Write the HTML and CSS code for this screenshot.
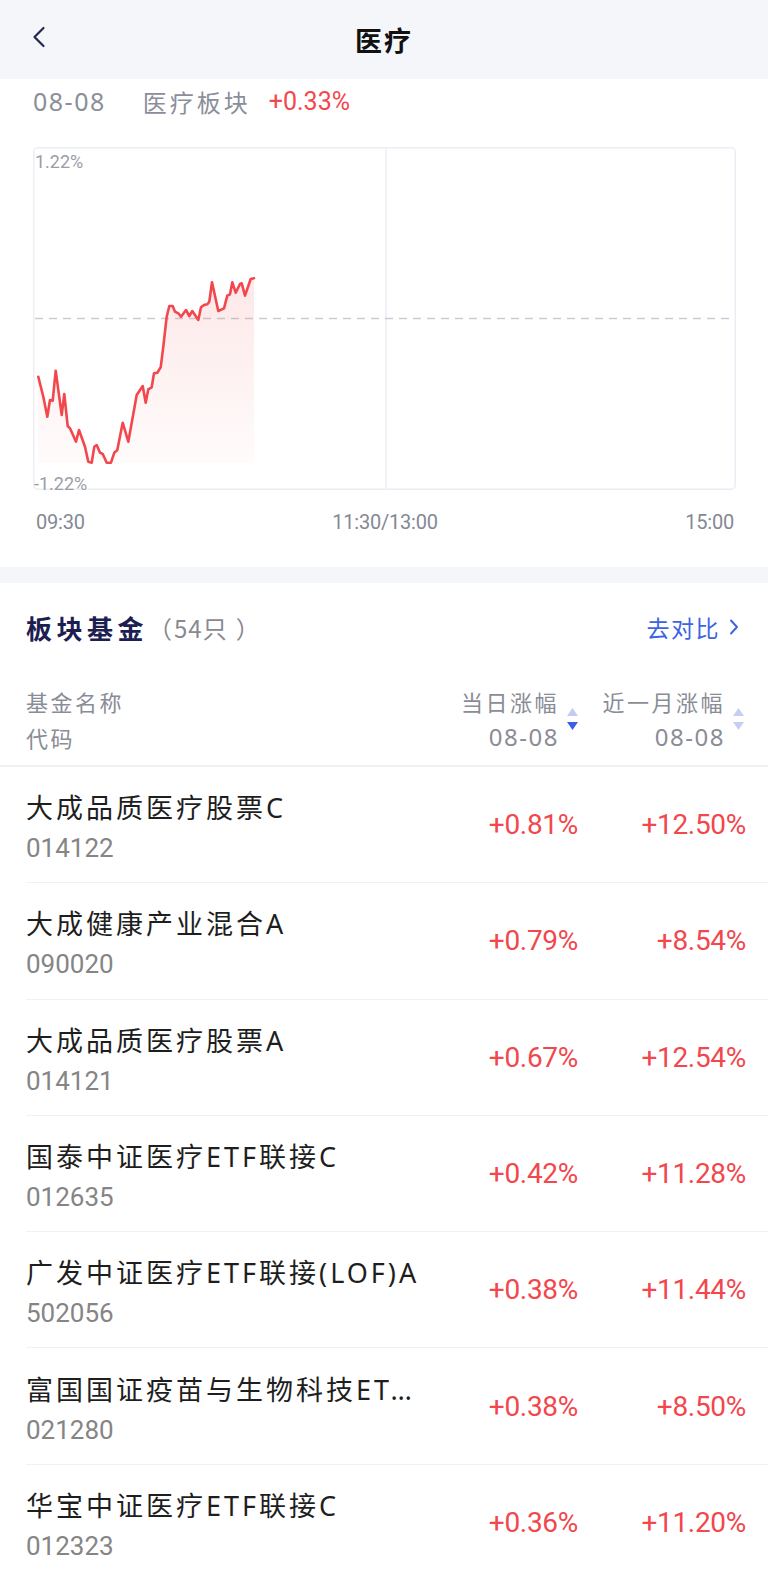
FILE: index.html
```html
<!DOCTYPE html>
<html lang="zh-CN">
<head>
<meta charset="utf-8">
<title>医疗</title>
<link rel="stylesheet" href="styles.css">
</head>
<body>
<div class="page">
  <header class="topbar">
    <span class="back">
      <svg width="16" height="22" viewBox="0 0 16 22"><path d="M12.5 2 L3.5 11 L12.5 20" fill="none" stroke="#23284f" stroke-width="2.2" stroke-linecap="round" stroke-linejoin="round"/></svg>
    </span>
    <h1 class="title">医疗</h1>
  </header>

  <div class="info">
    <span class="info-date">08-08</span>
    <span class="info-name">医疗板块</span>
    <span class="info-pct">+0.33%</span>
  </div>

  <div class="chart">
    <svg width="703" height="343" viewBox="33 147 703 343" class="chart-svg">
      <defs>
        <linearGradient id="fillg" x1="0" y1="278" x2="0" y2="463" gradientUnits="userSpaceOnUse">
          <stop offset="0" stop-color="#f24b50" stop-opacity="0.13"/>
          <stop offset="1" stop-color="#f24b50" stop-opacity="0.02"/>
        </linearGradient>
      </defs>
      <rect x="33.75" y="147.75" width="701.5" height="341.5" rx="4" fill="#fff" stroke="#eceef4" stroke-width="1.5"/>
      <line x1="386" y1="148" x2="386" y2="489" stroke="#eceef4" stroke-width="1.5"/>
      <line x1="35" y1="318.5" x2="734" y2="318.5" stroke="#cbccd3" stroke-width="1.5" stroke-dasharray="8 6"/>
      <path fill="url(#fillg)" d="M38.3 376.7 L43.3 396.7 L47.3 416.7 L50 400 L52.7 400.7 L55.7 370.7 L61.7 415 L64.3 394 L67.7 426 L70 428.3 L76 441.7 L79 430 L85 446.7 L88.3 461.7 L91.7 462.7 L94.3 446.7 L96.7 445 L100 452.7 L102.7 454 L106.7 462.7 L111 462.7 L114.3 452.7 L117.3 450 L122.7 422.7 L128.3 441.7 L136.7 395 L142.7 386 L145.7 402.7 L148.3 389.3 L151.7 387.3 L154 373.3 L157.3 372.7 L160.7 367.3 L163.3 346.7 L166.7 316.7 L169.3 306 L172.7 306 L175 311.7 L178.3 313.3 L181 316.7 L186 310 L189.3 316 L192.3 311 L198.3 320 L201 307.3 L204 305 L207.3 304.3 L209.3 301.7 L212 282.3 L218.3 311 L224 308.3 L227.3 295.7 L230 294.3 L232.3 282.3 L235.7 292.7 L240 284 L241.7 283.3 L245 295.7 L250.7 279 L254 278.3 L254 463 L38.3 463 Z"/>
      <path fill="none" stroke="#f2474d" stroke-width="2.6" stroke-linejoin="round" stroke-linecap="round" d="M38.3 376.7 L43.3 396.7 L47.3 416.7 L50 400 L52.7 400.7 L55.7 370.7 L61.7 415 L64.3 394 L67.7 426 L70 428.3 L76 441.7 L79 430 L85 446.7 L88.3 461.7 L91.7 462.7 L94.3 446.7 L96.7 445 L100 452.7 L102.7 454 L106.7 462.7 L111 462.7 L114.3 452.7 L117.3 450 L122.7 422.7 L128.3 441.7 L136.7 395 L142.7 386 L145.7 402.7 L148.3 389.3 L151.7 387.3 L154 373.3 L157.3 372.7 L160.7 367.3 L163.3 346.7 L166.7 316.7 L169.3 306 L172.7 306 L175 311.7 L178.3 313.3 L181 316.7 L186 310 L189.3 316 L192.3 311 L198.3 320 L201 307.3 L204 305 L207.3 304.3 L209.3 301.7 L212 282.3 L218.3 311 L224 308.3 L227.3 295.7 L230 294.3 L232.3 282.3 L235.7 292.7 L240 284 L241.7 283.3 L245 295.7 L250.7 279 L254 278.3"/>
      <text x="35" y="168" class="axis-label">1.22%</text>
      <text x="34" y="490" class="axis-label">-1.22%</text>
    </svg>
  </div>

  <div class="times">
    <span>09:30</span>
    <span>11:30/13:00</span>
    <span>15:00</span>
  </div>

  <div class="band"></div>

  <section class="funds">
    <div class="funds-head">
      <h2 class="funds-title">板块基金<span class="funds-count"><span class="paren">（</span>54只<span class="paren">）</span></span></h2>
      <a class="compare">去对比
        <svg width="10" height="16" viewBox="0 0 10 16"><path d="M2 1.5 L8 8 L2 14.5" fill="none" stroke="#3d63e3" stroke-width="1.9" stroke-linecap="round" stroke-linejoin="round"/></svg>
      </a>
    </div>

    <div class="thead">
      <div class="th-name">
        <div>基金名称</div>
        <div>代码</div>
      </div>
      <div class="th-col col1">
        <div class="th-text">
          <div>当日涨幅</div>
          <div class="th-date">08-08</div>
        </div>
        <svg class="sort" width="11" height="22" viewBox="0 0 11 22"><polygon points="0,8 5.5,0 11,8" fill="#c4caf0"/><polygon points="0,14 11,14 5.5,22" fill="#3a5ee6"/></svg>
      </div>
      <div class="th-col col2">
        <div class="th-text">
          <div>近一月涨幅</div>
          <div class="th-date">08-08</div>
        </div>
        <svg class="sort" width="11" height="22" viewBox="0 0 11 22"><polygon points="0,8 5.5,0 11,8" fill="#c9cdf1"/><polygon points="0,14 11,14 5.5,22" fill="#c9cdf1"/></svg>
      </div>
    </div>

    <ul class="list">
      <li class="row">
        <div class="fund"><div class="fund-name">大成品质医疗股票C</div><div class="fund-code">014122</div></div>
        <div class="val col1">+0.81%</div>
        <div class="val col2">+12.50%</div>
      </li>
      <li class="row">
        <div class="fund"><div class="fund-name">大成健康产业混合A</div><div class="fund-code">090020</div></div>
        <div class="val col1">+0.79%</div>
        <div class="val col2">+8.54%</div>
      </li>
      <li class="row">
        <div class="fund"><div class="fund-name">大成品质医疗股票A</div><div class="fund-code">014121</div></div>
        <div class="val col1">+0.67%</div>
        <div class="val col2">+12.54%</div>
      </li>
      <li class="row">
        <div class="fund"><div class="fund-name">国泰中证医疗ETF联接C</div><div class="fund-code">012635</div></div>
        <div class="val col1">+0.42%</div>
        <div class="val col2">+11.28%</div>
      </li>
      <li class="row">
        <div class="fund"><div class="fund-name">广发中证医疗ETF联接(LOF)A</div><div class="fund-code">502056</div></div>
        <div class="val col1">+0.38%</div>
        <div class="val col2">+11.44%</div>
      </li>
      <li class="row">
        <div class="fund"><div class="fund-name">富国国证疫苗与生物科技ET…</div><div class="fund-code">021280</div></div>
        <div class="val col1">+0.38%</div>
        <div class="val col2">+8.50%</div>
      </li>
      <li class="row">
        <div class="fund"><div class="fund-name">华宝中证医疗ETF联接C</div><div class="fund-code">012323</div></div>
        <div class="val col1">+0.36%</div>
        <div class="val col2">+11.20%</div>
      </li>
    </ul>
  </section>
</div>
</body>
</html>
```

FILE: styles.css
```css
* { box-sizing: border-box; }
html, body { margin: 0; padding: 0; background: #fff; }
body {
  font-family: "Noto Sans", "Noto Sans CJK SC", sans-serif;
  color: #1f1f1f;
  text-spacing-trim: space-all;
}
.page { width: 768px; overflow: hidden; }

/* top bar */
.topbar {
  height: 79px;
  background: #f5f6fa;
  display: flex;
  align-items: center;
  justify-content: center;
  position: relative;
}
.back {
  position: absolute;
  left: 31px;
  top: 26px;
  display: flex;
}
.title {
  margin: 0;
  font-family: "Noto Sans CJK SC", sans-serif;
  font-size: 27px;
  font-weight: 700;
  letter-spacing: 2px;
  color: #111;
}

/* info row */
.info {
  height: 44px;
  display: flex;
  align-items: center;
  padding-left: 33px;
  font-size: 25px;
}
.info-date {
  font-family: "Noto Sans", sans-serif;
  color: #8b8e9a;
  letter-spacing: 1.5px;
  margin-right: 37px;
}
.info-name {
  font-family: "Noto Sans CJK SC", sans-serif;
  font-size: 24px;
  color: #8b8e9a;
  letter-spacing: 3px;
  margin-right: 18px;
}
.info-pct {
  font-family: Roboto, sans-serif;
  color: #f2474d;
}

/* chart */
.chart {
  margin: 24px 0 0 33px;
  width: 703px;
  height: 343px;
}
.chart-svg { display: block; overflow: visible; }
.axis-label {
  font-family: Roboto, sans-serif;
  font-size: 18px;
  fill: #9a9da8;
}

.times {
  display: flex;
  justify-content: space-between;
  padding: 19px 34px 32px 36px;
  font-family: Roboto, sans-serif;
  font-size: 20px;
  line-height: 26px;
  color: #858894;
  letter-spacing: -0.2px;
}

.band { height: 16px; background: #f5f6fa; }

/* funds section */
.funds-head {
  height: 88px;
  display: flex;
  align-items: center;
  justify-content: space-between;
  padding: 0 29px 0 26px;
}
.funds-title {
  margin: 0;
  font-family: "Noto Sans CJK SC", sans-serif;
  font-size: 26px;
  font-weight: 700;
  letter-spacing: 4.5px;
  color: #1c2050;
  display: flex;
  align-items: center;
}
.funds-count {
  font-size: 24px;
  font-weight: 400;
  letter-spacing: 1px;
  color: #8a8a8f;
  font-family: "Noto Sans CJK SC", sans-serif;
}
.paren { display: inline-block; width: 24px; text-align: center; }
.funds-count .paren:first-child { margin-right: 2px; }
.funds-count .paren:last-child { margin-left: 8px; }
.compare {
  display: flex;
  align-items: center;
  gap: 9px;
  font-family: "Noto Sans CJK SC", sans-serif;
  font-size: 23px;
  letter-spacing: 1.5px;
  color: #3d63e3;
}

.thead {
  display: flex;
  align-items: center;
  padding: 12px 22px 10px 26px;
  border-bottom: 2px solid #f0f1f4;
  font-family: "Noto Sans CJK SC", sans-serif;
  font-size: 22px;
  line-height: 36px;
  color: #8a8c96;
  letter-spacing: 2.5px;
}
.th-name { flex: 1; }
.th-col {
  display: flex;
  align-items: center;
  justify-content: flex-end;
  gap: 8px;
}
.th-col.col1 { width: 140px; padding-right: 0; }
.th-col.col2 { width: 168px; padding-right: 2px; }
.th-text { text-align: right; }
.th-date {
  font-family: "Noto Sans", sans-serif;
  font-size: 24px;
  letter-spacing: 1.5px;
}
.sort { display: block; }

.list { list-style: none; margin: 0; padding: 0; }
.row {
  margin-left: 26px;
  padding-right: 22px;
  height: 116.3px;
  border-bottom: 1px solid #f1f1f4;
  display: flex;
  align-items: center;
}
.fund {
  flex: 1;
  min-width: 0;
  padding-top: 4px;
}
.fund-name {
  font-family: "Noto Sans", "Noto Sans CJK SC", sans-serif;
  font-size: 27px;
  line-height: 36px;
  letter-spacing: 3px;
  color: #1e1e1e;
  white-space: nowrap;
  overflow: hidden;
  text-overflow: ellipsis;
}
.fund-code {
  margin-top: 7px;
  font-family: Roboto, sans-serif;
  font-size: 26px;
  line-height: 30px;
  color: #858585;
}
.val {
  font-family: Roboto, sans-serif;
  font-size: 28px;
  color: #f2474d;
  text-align: right;
  letter-spacing: -0.3px;
}
.val.col1 { width: 140px; }
.val.col2 { width: 168px; }
```
